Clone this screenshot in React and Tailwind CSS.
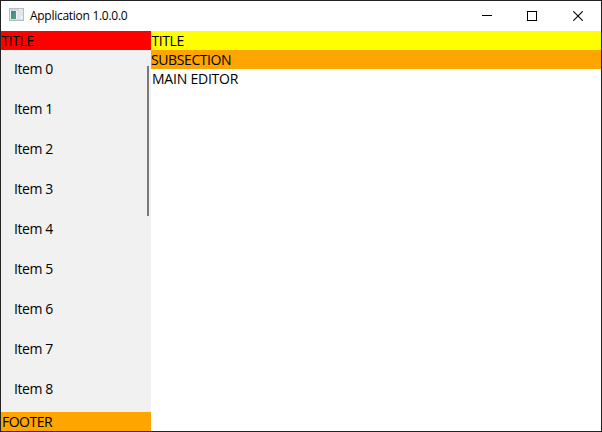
const items = Array.from({ length: 9 }, (_, i) => `Item ${i}`);

function AppIcon() {
  return (
    <svg width="15" height="13" viewBox="0 0 15 13" shapeRendering="crispEdges" className="mb-[3px] shrink-0">
      <defs>
        <linearGradient id="pane" x1="0" y1="0" x2="1" y2="1">
          <stop offset="0" stopColor="#447fa5" />
          <stop offset="1" stopColor="#4aa873" />
        </linearGradient>
      </defs>
      <rect width="15" height="13" fill="#b9bcc0" />
      <rect x="1" y="1" width="13" height="11" fill="#d9dcdf" />
      <rect x="10" y="1" width="3" height="1" fill="#f4f5f6" />
      <rect x="1" y="3" width="13" height="8" fill="#f1f2f4" />
      <rect x="2" y="3" width="5" height="8" fill="url(#pane)" />
      <rect x="8" y="3" width="4" height="8" fill="#e2e6ec" />
      <rect x="12" y="4" width="2" height="4" fill="#dbe9e1" />
    </svg>
  );
}

function TitleBar() {
  return (
    <header className="flex h-[30px] shrink-0 items-center bg-white pl-2">
      <AppIcon />
      <span className="ml-1.5 text-[12px] leading-[16px] tracking-[-0.28px]">Application 1.0.0.0</span>
      <div className="ml-auto flex h-full">
        <div className="flex w-[46px] items-center justify-center">
          <svg width="10" height="10" shapeRendering="crispEdges"><rect y="4" width="10" height="1" /></svg>
        </div>
        <div className="flex w-[45px] items-center justify-center">
          <svg width="10" height="10" shapeRendering="crispEdges" className="-ml-px"><rect x=".5" y=".5" width="9" height="9" fill="none" stroke="#000" /></svg>
        </div>
        <div className="flex w-[46px] items-center justify-center">
          <svg width="10" height="10"><path d="M.3.3l9.4 9.4M9.7.3L.3 9.7" stroke="#000" strokeWidth="1.1" /></svg>
        </div>
      </div>
    </header>
  );
}

export default function App() {
  return (
    <div className="flex h-[432px] w-[602px] flex-col overflow-hidden border border-[#222222] bg-white font-['Open_Sans','Noto_Sans',sans-serif] text-[14px] leading-[19px] tracking-[-0.22px] text-black">
      <TitleBar />
      <div className="flex min-h-0 flex-1">
        <aside className="flex w-[150px] shrink-0 flex-col bg-[#f1f1f1]">
          <div className="h-[19px] shrink-0 bg-[#ff0000] pl-[0.4px] leading-[20px] tracking-[-0.4px]">TITLE</div>
          <div className="flex min-h-0 flex-1">
            <ul className="flex-1 overflow-hidden tracking-[-0.4px]">
              {items.map((item) => (
                <li key={item} className="flex h-10 items-center pb-1 pl-[13px]">{item}</li>
              ))}
            </ul>
            <div className="mt-4 mr-[2px] h-[150px] w-[2px] bg-[#797979]" />
          </div>
          <div className="h-[19px] shrink-0 bg-[#ffa500] pl-px leading-[20px] tracking-[-0.5px]">FOOTER</div>
        </aside>
        <main className="flex flex-1 flex-col leading-[20px]">
          <div className="h-[19px] bg-[#ffff00] pl-[0.4px] tracking-[-0.4px]">TITLE</div>
          <div className="h-[19px] bg-[#ffa500] tracking-[-0.4px]">SUBSECTION</div>
          <div className="h-[19px] pl-px">MAIN EDITOR</div>
        </main>
      </div>
    </div>
  );
}
